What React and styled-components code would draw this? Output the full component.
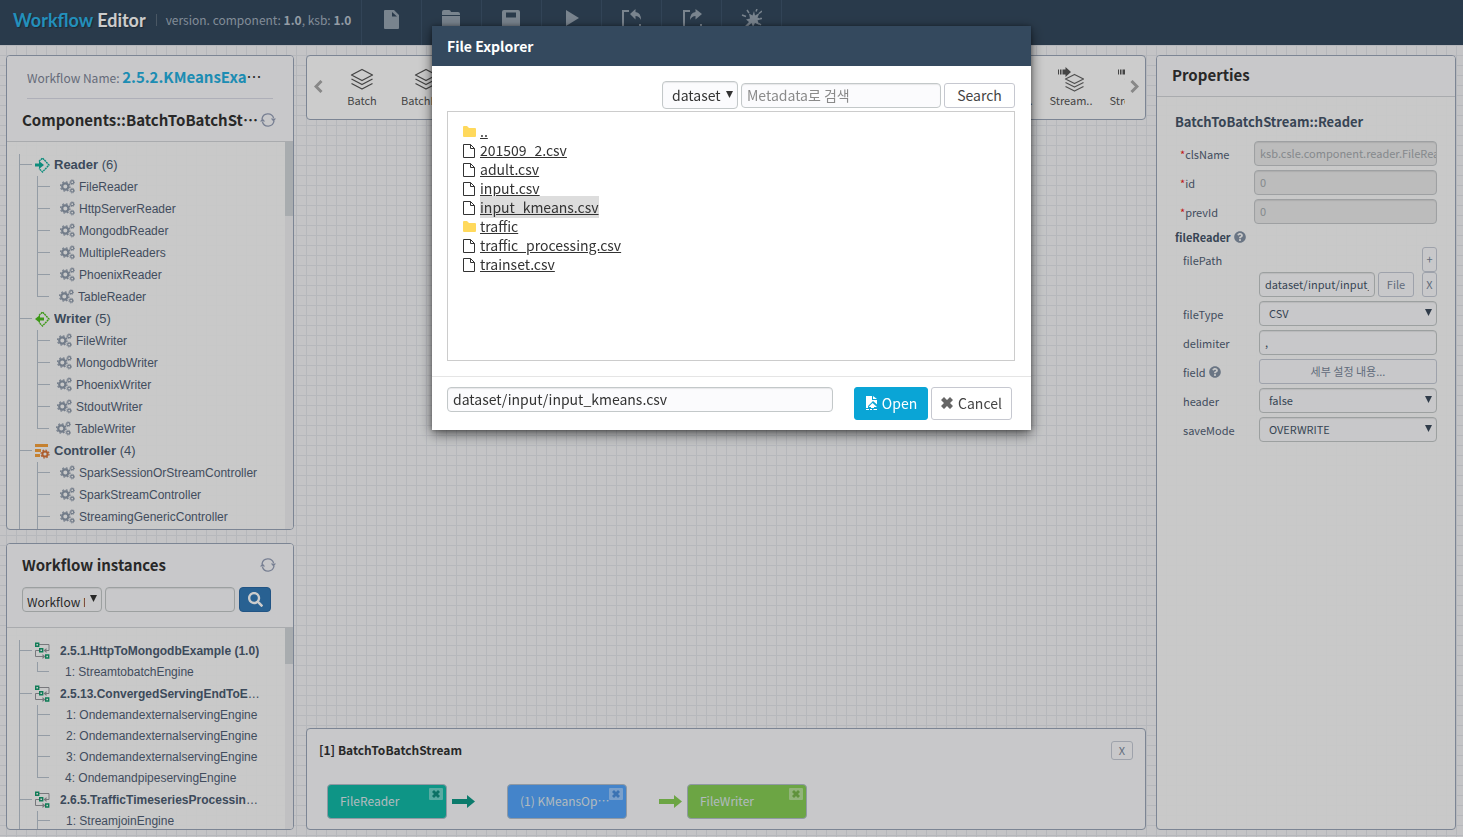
import React from "react";
import styled, { createGlobalStyle, css } from "styled-components";
import { FaQuestionCircle, FaSearch } from "react-icons/fa";

const sans = `"Noto Sans CJK KR", "Noto Sans", sans-serif`;
const arial = `"Liberation Sans", Arial, sans-serif`;

const GlobalStyle = createGlobalStyle`
  *, *::before, *::after { box-sizing: border-box; }
  body { margin: 0; font-family: ${sans}; font-size: 12px; color: #333; }
  button, input, select { font-family: inherit; margin: 0; outline: none; }
  ul { list-style: none; margin: 0; padding: 0; }
  h1, h2, h3, p { margin: 0; }
  svg { display: block; flex: none; }
`;

/* ---------- page shell ---------- */

const Page = styled.div`
  display: flex;
  flex-direction: column;
  height: 100vh;
  overflow: hidden;
  background-color: #f5f6f8;
  background-image: linear-gradient(#e4e6ec 1px, transparent 1px),
    linear-gradient(90deg, #e4e6ec 1px, transparent 1px);
  background-size: 10px 10px;
  background-position: 6px 5px;
`;

const TopBar = styled.header`
  display: flex;
  flex: none;
  height: 45px;
  background: #34495e;
`;

const Brand = styled.div`
  display: flex;
  align-items: center;
  width: 361px;
  padding: 0 0 6px 13px;
  white-space: nowrap;
`;

const Logo = styled.h1`
  font: 700 18px/24px Lato, sans-serif;
  color: #fff;
  text-shadow: 1px 1px 1px rgba(0, 0, 0, 0.3);
  span { color: #2cb4ea; }
`;

const Version = styled.p`
  margin-left: 10px;
  padding-left: 9px;
  border-left: 1px solid #5d6d7e;
  font-size: 12px;
  line-height: 12px;
  color: #a3b0be;
  b { color: #b9c4d0; }
`;

const Tools = styled.nav`
  display: flex;
  border-right: 1px solid #3f566d;
`;

const ToolButton = styled.button`
  display: flex;
  justify-content: center;
  width: 60px;
  padding: 9px 1px 0 0;
  border: 0;
  border-left: 1px solid #3f566d;
  background: none;
  color: #98a5b2;
`;

const Workspace = styled.main`
  display: grid;
  flex: 1;
  min-height: 0;
  grid-template-columns: 288px minmax(0, 1fr) 300px;
  column-gap: 10px;
  padding: 10px 7px 7px 6px;
`;

const SideColumn = styled.div`
  display: flex;
  flex-direction: column;
  gap: 13px;
  min-height: 0;
`;

const CenterColumn = styled.div`
  display: flex;
  flex-direction: column;
  justify-content: space-between;
  min-width: 0;
  padding-left: 2px;
`;

const Panel = styled.section`
  display: flex;
  flex-direction: column;
  flex: ${(p) => p.$grow || "none"};
  min-height: 0;
  overflow: hidden;
  border: 1px solid #9ca7b9;
  border-radius: 4px;
  background: rgba(253, 253, 253, 0.85);
`;

const PanelHead = styled.div`
  flex: none;
  height: ${(p) => p.$height}px;
  padding: ${(p) => p.$top || 8}px 17px 0 15px;
  border-bottom: 1px solid #d4d6da;
  background: #fafbfd;
`;

const TitleRow = styled.div`
  display: flex;
  align-items: center;
  justify-content: space-between;
`;

const PanelTitle = styled.h2`
  overflow: hidden;
  font-size: 15px;
  font-weight: 700;
  line-height: 22px;
  white-space: nowrap;
  text-overflow: ellipsis;
`;

const IconButton = styled.button`
  display: flex;
  padding: 0;
  border: 0;
  background: none;
  color: #97a0b8;
`;

const NameRow = styled.p`
  margin: 0 0 10px 5px;
  padding-bottom: 8px;
  width: 246px;
  border-bottom: 1px solid #dadbe6;
  line-height: 25px;
`;

const NameText = styled.span`
  display: block;
  width: 236px;
  overflow: hidden;
  font-size: 15px;
  white-space: nowrap;
  text-overflow: ellipsis;
  span { font-size: 12px; color: #808698; }
  b { color: #25b0e0; }
`;

/* ---------- tree ---------- */

const TreeArea = styled.div`
  display: flex;
  flex: 1;
  min-height: 0;
  overflow: hidden;
`;

const TreeList = styled.ul`
  flex: 1;
  min-width: 0;
  padding: 12px 0 0 12px;
`;

const ScrollTrack = styled.div`
  width: 8px;
  background: #f1f1f3;
`;

const ScrollThumb = styled.div`
  height: ${(p) => p.$size}px;
  background: #d3d8db;
`;

const line = "linear-gradient(#b9c3cf, #b9c3cf)";

const Branch = styled.li`
  padding-left: 16px;
  background: ${line} 0 0 / 1px 100% no-repeat, ${line} 0 10px / 13px 1px no-repeat;
`;

const BranchLabel = styled.div`
  display: flex;
  align-items: center;
  gap: ${(p) => p.$gap}px;
  height: 22px;
  font: ${(p) => p.$size}px/22px ${arial};
  color: #4c5d72;
`;

const BranchText = styled.span`
  max-width: 203px;
  overflow: hidden;
  white-space: nowrap;
  text-overflow: ellipsis;
`;

const Leaf = styled.li`
  display: flex;
  align-items: center;
  gap: 4px;
  height: ${(p) => p.$height}px;
  margin-left: 2px;
  padding-left: ${(p) => p.$indent}px;
  font: 12px/20px ${arial};
  white-space: nowrap;
  color: #526176;
  background: ${line} 0 0 / 1px 100% no-repeat,
    ${line} 0 ${(p) => p.$height - 12}px / 13px 1px no-repeat;
  svg { margin-bottom: 2px; color: #8f9bac; }
  &:last-child {
    padding-left: ${(p) => p.$indent - 1}px;
    background-size: 1px ${(p) => p.$height - 12}px, 12px 1px;
  }
`;

/* ---------- form parts ---------- */

const fieldBox = css`
  height: 25px;
  border: 1px solid #c3c8c9;
  border-radius: 4px;
  background: #fbfbfd;
  box-shadow: inset 0 1px 1px rgba(0, 0, 0, 0.08);
`;

const TextField = styled.input`
  ${fieldBox}
  flex: ${(p) => p.$flex || "1"};
  width: ${(p) => p.$width || "auto"};
  min-width: 0;
  padding: 0 5px 1px;
  font-size: ${(p) => p.$size || 11}px;
  color: ${(p) => p.$ink || "#46566a"};
  &:disabled { padding-right: 0; background: #ebebeb; border-color: #c6c9cb; color: #a7abb0; }
  &::placeholder { color: #8a8a8a; opacity: 1; }
`;

const SelectWrap = styled.span`
  display: grid;
  flex: ${(p) => p.$flex || "1"};
  width: ${(p) => p.$width || "auto"};
  align-items: center;
  & > * { grid-area: 1 / 1; }
  & > svg { justify-self: end; margin: 0 5px 2px 0; pointer-events: none; color: ${(p) => p.$ink || "#3d4b5d"}; }
`;

const SelectBox = styled.select`
  ${fieldBox}
  appearance: none;
  width: 100%;
  height: ${(p) => p.$height || 25}px;
  padding: ${(p) => p.$pad || "0 16px 1px 9px"};
  font-size: ${(p) => p.$size || 11}px;
  color: ${(p) => p.$ink || "#46566a"};
`;

const GhostButton = styled.button`
  flex: ${(p) => p.$flex || "none"};
  width: ${(p) => p.$width || "auto"};
  height: ${(p) => p.$height || 25}px;
  padding: 0;
  border: 1px solid #c6cbd6;
  border-radius: 3px;
  background: #fbfbfd;
  font-size: 11px;
  line-height: 1;
  color: #79879b;
`;

const SearchRow = styled.div`
  display: flex;
  gap: 3px;
  margin-top: 11px;
`;

const BlueButton = styled.button`
  display: flex;
  align-items: center;
  justify-content: center;
  width: 32px;
  height: 25px;
  margin-left: 1px;
  border: 1px solid #2b6aa6;
  border-radius: 4px;
  background: #337ab7;
  color: #fff;
`;

/* ---------- stream strip ---------- */

const Strip = styled.section`
  display: flex;
  align-items: center;
  height: 65px;
  padding: 0 6px 2px 7px;
  border: 1px solid #9ca7b9;
  border-radius: 4px;
  background: #fff;
`;

const StripView = styled.ul`
  display: flex;
  flex: 1;
  gap: 16px;
  min-width: 0;
  margin: 0 5px 0 17px;
  overflow: hidden;
`;

const StripItem = styled.li`
  display: flex;
  flex: none;
  flex-direction: column;
  align-items: center;
  width: ${(p) => (p.$wide ? 51 : 44)}px;
  font-size: 11px;
  line-height: 16px;
  color: #555;
`;

/* ---------- flow panel ---------- */

const FlowPanel = styled.section`
  height: 102px;
  padding: 11px 12px 0;
  border: 1px solid #9ca7b9;
  border-radius: 4px;
  background: #fafbfd;
`;

const FlowTitle = styled.h2`
  font-size: 12px;
  line-height: 20px;
`;

const FlowRow = styled.div`
  display: flex;
  align-items: center;
  margin: 24px 0 0 8px;
`;

const FlowNode = styled.div`
  display: flex;
  align-items: flex-start;
  width: 120px;
  height: 35px;
  padding: 3px 3px 0 12px;
  border: 1px solid #b4c0cc;
  border-radius: 4px;
  background: ${(p) => p.$fill};
  color: #dfe9ee;
  font-size: 12px;
  line-height: 26px;
  span {
    flex: 1;
    overflow: hidden;
    white-space: nowrap;
    text-overflow: ellipsis;
  }
`;

const NodeClose = styled.button`
  display: flex;
  align-items: center;
  justify-content: center;
  width: 14px;
  height: 12px;
  margin-left: -4px;
  padding: 0;
  border: 0;
  border-radius: 1px;
  background: rgba(255, 255, 255, 0.4);
  color: ${(p) => p.$ink};
`;

const FlowLink = styled.div`
  display: flex;
  justify-content: ${(p) => p.$side};
  width: 60px;
  padding: 0 5px;
  color: ${(p) => p.$ink};
`;

/* ---------- properties ---------- */

const Properties = styled.form`
  padding: 13px 18px 0;
`;

const SectionTitle = styled.h3`
  margin-bottom: 7px;
  font-size: 13px;
  line-height: 24px;
  color: #46566a;
`;

const GroupTitle = styled.h3`
  display: flex;
  align-items: center;
  gap: 3px;
  height: 17px;
  margin-bottom: 2px;
  font-size: 11px;
  color: #46566a;
  svg { color: #8593a5; }
`;

const Row = styled.div`
  display: flex;
  align-items: center;
  justify-content: ${(p) => (p.$spread ? "space-between" : "normal")};
  gap: 3px;
  margin-bottom: ${(p) => (p.$spread ? 0 : 4)}px;
  padding-left: ${(p) => p.$indent || 8}px;
`;

const RowLabel = styled.label`
  display: flex;
  align-items: center;
  gap: 3px;
  width: ${(p) => p.$width || 73}px;
  font-size: 11px;
  line-height: 18px;
  color: #526176;
  i { margin-right: -3px; font-style: normal; color: #f02020; }
  svg { color: #8593a5; }
`;

const PathButtons = styled.div`
  display: flex;
  justify-content: space-between;
  width: 59px;
`;

/* ---------- dialog ---------- */

const Overlay = styled.div`
  position: fixed;
  inset: 0;
  padding-top: 26px;
  background: rgba(0, 0, 0, 0.2);
`;

const Dialog = styled.div`
  width: 599px;
  max-width: 100%;
  margin: 0 auto;
  background: #fff;
  box-shadow: 0 4px 12px rgba(0, 0, 0, 0.6), 0 0 4px rgba(0, 0, 0, 0.3);
`;

const DialogHead = styled.h2`
  padding: 0 15px;
  background: #34495e;
  color: #fff;
  font-size: 14px;
  line-height: 40px;
`;

const DialogBody = styled.div`
  padding: 15px 16px 15px 15px;
`;

const Filter = styled.div`
  display: flex;
  align-items: center;
  justify-content: flex-end;
  gap: 3px;
  margin-bottom: 2px;
`;

const DialogButton = styled.button`
  display: flex;
  flex: none;
  align-items: center;
  justify-content: center;
  gap: 5px;
  width: ${(p) => p.$width}px;
  height: ${(p) => p.$height}px;
  padding: 0 0 1px;
  border: 1px solid ${(p) => (p.$primary ? "#0aa5d6" : "#c6c8d0")};
  border-radius: 3px;
  background: ${(p) => (p.$primary ? "#0aa5d6" : "#fff")};
  color: ${(p) => (p.$primary ? "#fff" : "#444")};
  font-size: 14px;
  line-height: 20px;
  svg { color: #666; }
`;

const FileList = styled.ul`
  height: 250px;
  padding: 10px 15px;
  border: 1px solid #ccc;
`;

const FileRow = styled.li`
  display: flex;
  align-items: center;
  gap: 4px;
  height: 19px;
  a {
    margin-bottom: 2px;
    font-size: 14px;
    line-height: 22px;
    color: #333;
    text-decoration: underline;
    background: ${(p) => (p.$picked ? "#ddd" : "none")};
  }
`;

const DialogFoot = styled.div`
  display: flex;
  gap: 3px;
  padding: 10px 19px 10px 15px;
  border-top: 1px solid #e5e5e5;
`;

const PathSlot = styled.div`
  display: flex;
  flex: 1;
  margin-right: 18px;
`;

/* ---------- drawings ---------- */

const Svg = ({ w, h, children, ...rest }) => (
  <svg width={w} height={h} viewBox={`0 0 ${w} ${h}`} aria-hidden="true" {...rest}>
    {children}
  </svg>
);

const Arrow = () => (
  <Svg w={7} h={7}><path d="M0 0h7L3.5 7z" fill="currentColor" /></Svg>
);

const Cross = ({ size = 8 }) => (
  <svg width={size} height={size} viewBox="0 0 12 12" aria-hidden="true">
    <path d="M3 0 6 3 9 0l3 3-3 3 3 3-3 3-3-3-3 3-3-3 3-3-3-3z" fill="currentColor" />
  </svg>
);

const Refresh = () => (
  <Svg w={16} h={14} fill="none" stroke="currentColor" strokeWidth="1.3">
    <path d="M2 6A6 6 0 0 1 13.6 5M14 8A6 6 0 0 1 2.400 9" />
    <path d="M10.800 5.500H16l-2.400 3.200zM0 8.500h5.200L2.400 5.300z" fill="currentColor" stroke="none" />
  </Svg>
);

const Cogs = () => (
  <Svg w={15} h={15} fill="none" stroke="currentColor">
    <circle cx="5.3" cy="7.500" r="3.100" strokeWidth="2.200" />
    <circle cx="5.3" cy="7.500" r="4.700" strokeWidth="1.300" strokeDasharray="1.850 1.840" />
    <circle cx="12.200" cy="3.200" r="1.500" strokeWidth="1.200" />
    <circle cx="12.200" cy="3.200" r="2.400" strokeWidth=".9" strokeDasharray="1 .885" />
    <circle cx="12.200" cy="11.600" r="1.500" strokeWidth="1.200" />
    <circle cx="12.200" cy="11.600" r="2.400" strokeWidth=".9" strokeDasharray="1 .885" />
  </Svg>
);

const Layers = () => (
  <Svg w={24} h={26} fill="none" stroke="#555" strokeWidth="1.3" strokeLinejoin="round">
    <path d="M12 3.500 22.500 9 12 14.500 1.500 9z" />
    <path d="M1.500 13 12 18.500 22.500 13M1.500 17.500 12 23l10.500-5.500" />
  </Svg>
);

const StreamLayers = () => (
  <Svg w={26} h={26} fill="none" stroke="#666" strokeWidth="1.3" strokeLinejoin="round">
    <path d="M16.500 8.500 25.500 13l-9 4.500L7.500 13zM7.500 16.500l9 4.500 9-4.500M7.500 20.500l9 4.500 9-4.500" />
    <path d="M0 3.500h1v5H0zM2 3.500h1.500v5H2zM4.500 3.500h3V1L13 6l-5.500 5V8.500h-3z" fill="#555" stroke="none" />
  </Svg>
);

const Chevron = ({ flip }) => (
  <Svg w={9} h={13} fill="none" stroke="#aaa" strokeWidth="3">
    <path d={flip ? "M1.500 1 7 6.500 1.500 12" : "M7.500 1 2 6.500 7.500 12"} />
  </Svg>
);

const toolIcons = [
  ["New", <path fillRule="evenodd" d="M5 1h9l5 5v13q0 1-1 1H5q-1 0-1-1V2q0-1 1-1zM12 3v4.500h5z" />],
  ["Open", <path d="M2 3q0-2 2-2h5q1.500 0 2 2h7q2 0 2 2v1H2zM2 7h18v12q0 1-2 1H4q-2 0-2-1z" />],
  ["Save", <path fillRule="evenodd" d="M2 3q0-2 2-2h14q2 0 2 2v17H2zM6 3.500v5h10v-5z" />],
  ["Run", <path d="M6 1 19 9 6 17z" />],
  ["Import", <><path d="M3 20V2h6M20 20v-5" fill="none" stroke="currentColor" strokeWidth="2" /><path d="M10 5 15.500 0v3q5.500.5 5.500 8-2-4-5.500-4v3.500z" /></>],
  ["Export", <><path d="M4 20V2h6M21 20v-5" fill="none" stroke="currentColor" strokeWidth="2" /><path d="M22 5 15.500 0v3Q10 3.500 10 11q2-4 5.500-4v3.500z" /></>],
  ["Magic", <><path d="m14 2 1 4.500 4.500-2.500-2 4.500 4 1.500-4 1.500 2 4.500-4.500-2L13 18l-1.500-4L5 20l-2-1 6-6-3-2.500 4-1L9 4.500l3.500 2z" /><path d="M7 1l2 3M17 0l-1 2.500M22 2l-3 2.500M2 6l4 1.500M20 9.500h2M21 16l-2-1.500" stroke="currentColor" strokeWidth="1.500" /></>],
];

const groupIcons = {
  reader: (
    <Svg w={15} h={16} fill="none" stroke="#12b09c" strokeWidth="1.400">
      <path d="M4 4.500 7.500 1l6.500 7-6.500 7L4 11.500" strokeDasharray="2 .6" />
      <path d="M0 6.500h4V4l5 4-5 4V9.500H0z" fill="#12b09c" stroke="none" />
    </Svg>
  ),
  writer: (
    <Svg w={15} h={16} fill="none" stroke="#4cbf1c" strokeWidth="1.400">
      <path d="M4 4.500 7.500 1l6.500 7-6.500 7L4 11.500" strokeDasharray="2 .6" />
      <path d="M9 6.500H5V4L0 8l5 4V9.500h4z" fill="#4cbf1c" stroke="none" />
    </Svg>
  ),
  controller: (
    <Svg w={15} h={16}>
      <path d="M0 1h13v3H0zM0 6h6v3H0zM0 11h5v3H0z" fill="#f7a23c" />
      <circle cx="10" cy="11" r="2.600" fill="none" stroke="#d9763a" strokeWidth="2" />
      <circle cx="10" cy="11" r="4" fill="none" stroke="#d9763a" strokeWidth="1.200" strokeDasharray="1.600 1.540" />
    </Svg>
  ),
  flow: (
    <Svg w={15} h={17} fill="none">
      <path d="M4 2.500h10v6h-3M4.500 8.500h-4v6h10" stroke="#95979c" />
      <path d="M11.500 6v5l-3-2.500zM7.500 12v5l3-2.500z" fill="#95979c" />
      <path d="M.7 1.200h3v3h-3zM4.700 6.700h3v3h-3zM10.700 13h3v3h-3z" fill="#f8f8f9" stroke="#129c6c" strokeWidth="1.400" />
    </Svg>
  ),
};

const FolderIcon = () => (
  <Svg w={13} h={12}><path d="M0 1q0-1 1-1h3l2 2h6q1 0 1 1v7q0 1-1 1H1q-1 0-1-1z" fill="#ffd95c" /></Svg>
);

const FileIcon = () => (
  <Svg w={13} h={14} fill="none" stroke="#333">
    <path d="M.5.500h7l4 4v9H.5zM7.500.500v4h4" />
  </Svg>
);

const OpenIcon = () => (
  <Svg w={12} h={14}>
    <path d="M1 0h6v4h5v4.500L8 5 3 10v2H1zM8 0l4 3H8zM7.500 7 12 11H9v1H6v-1H3.500zM1 13h3v1H1zM5 13h2v1H5zM8.500 13H12v1H8.500z" fill="#fff" />
  </Svg>
);

const LinkArrow = () => (
  <Svg w={23} h={13}><path d="M0 4h15V0l8 6.500L15 13V9H0z" fill="currentColor" /></Svg>
);

/* ---------- data ---------- */

const components = [
  { name: "Reader", icon: "reader", indent: 23, items: ["FileReader", "HttpServerReader", "MongodbReader", "MultipleReaders", "PhoenixReader", "TableReader"], count: 6 },
  { name: "Writer", icon: "writer", indent: 20, items: ["FileWriter", "MongodbWriter", "PhoenixWriter", "StdoutWriter", "TableWriter"], count: 5 },
  { name: "Controller", icon: "controller", indent: 23, items: ["SparkSessionOrStreamController", "SparkStreamController", "StreamingGenericController", "StreamController"], count: 4 },
];

const instances = [
  { name: "2.5.1.HttpToMongodbExample (1.0)", items: ["1: StreamtobatchEngine"] },
  { name: "2.5.13.ConvergedServingEndToEndExample (1.0)", items: ["1: OndemandexternalservingEngine", "2: OndemandexternalservingEngine", "3: OndemandexternalservingEngine", "4: OndemandpipeservingEngine"] },
  { name: "2.6.5.TrafficTimeseriesProcessingExample (1.0)", items: ["1: StreamjoinEngine", "2: StreamtobatchEngine"] },
];

const streams = [
  ["Batch"], ["BatchBa..", 1], ["Stream.."], ["BatchT..", 1], ["BatchT..", 1], ["Stream.."], ["BatchM..", 1],
  ["BatchG..", 1], ["BatchL..", 1], ["BatchS..", 1], ["Stream.."], ["Stream.."], ["Stream.."],
];

const files = [
  ["..", true], ["201509_2.csv"], ["adult.csv"], ["input.csv"], ["input_kmeans.csv"],
  ["traffic", true], ["traffic_processing.csv"], ["trainset.csv"],
];

const Select = ({ id, label, value, wrap, ...rest }) => (
  <SelectWrap {...wrap}>
    <SelectBox id={id} aria-label={label} defaultValue={value} {...rest}>
      <option>{value}</option>
    </SelectBox>
    <Arrow />
  </SelectWrap>
);

const Header = () => (
  <TopBar>
    <Brand>
      <Logo><span>Workflow</span> Editor</Logo>
      <Version>version. component: <b>1.0</b>, ksb: <b>1.0</b></Version>
    </Brand>
    <Tools>
      {toolIcons.map(([name, art]) => (
        <ToolButton key={name} aria-label={name}>
          <Svg w={22} h={21} fill="currentColor">{art}</Svg>
        </ToolButton>
      ))}
    </Tools>
  </TopBar>
);

const ComponentsPanel = () => (
  <Panel $grow="475 1 0">
    <PanelHead $height={86}>
      <NameRow><NameText><span>Workflow Name: </span><b>2.5.2.KMeansExample</b></NameText></NameRow>
      <TitleRow>
        <PanelTitle>Components::BatchToBatchStream</PanelTitle>
        <IconButton aria-label="Refresh components"><Refresh /></IconButton>
      </TitleRow>
    </PanelHead>
    <TreeArea>
      <TreeList>
        {components.map((g) => (
          <Branch key={g.name}>
            <BranchLabel $gap={4} $size={13}>
              {groupIcons[g.icon]}
              <BranchText><b>{g.name}</b> ({g.count})</BranchText>
            </BranchLabel>
            <ul>
              {g.items.map((n) => (
                <Leaf key={n} $height={22} $indent={g.indent}>
                  <Cogs />{n}
                </Leaf>
              ))}
            </ul>
          </Branch>
        ))}
      </TreeList>
      <ScrollTrack><ScrollThumb $size={74} /></ScrollTrack>
    </TreeArea>
  </Panel>
);

const InstancesPanel = () => (
  <Panel $grow="287 1 0">
    <PanelHead $height={84} $top={10}>
      <TitleRow>
        <PanelTitle>Workflow instances</PanelTitle>
        <IconButton aria-label="Refresh instances"><Refresh /></IconButton>
      </TitleRow>
      <SearchRow>
        <Select label="Search by" value="Workflow Name" wrap={{ $flex: "none", $width: "80px", $ink: "#333" }} $pad="5px 16px 0 4px" $size={12} $ink="#333" />
        <TextField aria-label="Search instances" $flex="none" $width="130px" />
        <BlueButton aria-label="Search"><FaSearch size={15} /></BlueButton>
      </SearchRow>
    </PanelHead>
    <TreeArea>
      <TreeList>
        {instances.map((g) => (
          <Branch key={g.name}>
            <BranchLabel $gap={10} $size={12}>
              {groupIcons.flow}
              <BranchText><b>{g.name}</b></BranchText>
            </BranchLabel>
            <ul>
              {g.items.map((n) => (
                <Leaf key={n} $height={21} $indent={29}>{n}</Leaf>
              ))}
            </ul>
          </Branch>
        ))}
      </TreeList>
      <ScrollTrack><ScrollThumb $size={36} /></ScrollTrack>
    </TreeArea>
  </Panel>
);

const Center = () => (
  <CenterColumn>
    <Strip>
      <IconButton aria-label="Previous"><Chevron /></IconButton>
      <StripView>
        {streams.map(([name, wide], i) => (
          <StripItem key={i} $wide={wide}>
            {i < 2 ? <Layers /> : <StreamLayers />}
            {name}
          </StripItem>
        ))}
      </StripView>
      <IconButton aria-label="Next"><Chevron flip /></IconButton>
    </Strip>
    <FlowPanel>
      <TitleRow>
        <FlowTitle>[1] BatchToBatchStream</FlowTitle>
        <GhostButton $width="22px" $height={19}>X</GhostButton>
      </TitleRow>
      <FlowRow>
        <FlowNode $fill="#12bba8">
          <span>FileReader</span>
          <NodeClose $ink="#0f8f80" aria-label="Remove FileReader"><Cross /></NodeClose>
        </FlowNode>
        <FlowLink $side="flex-start" $ink="#109a88"><LinkArrow /></FlowLink>
        <FlowNode $fill="#55a5fd">
          <span>(1) KMeansOperator</span>
          <NodeClose $ink="#4a90e0" aria-label="Remove KMeansOperator"><Cross /></NodeClose>
        </FlowNode>
        <FlowLink $side="flex-end" $ink="#88cf55"><LinkArrow /></FlowLink>
        <FlowNode $fill="#88cf55">
          <span>FileWriter</span>
          <NodeClose $ink="#78b74b" aria-label="Remove FileWriter"><Cross /></NodeClose>
        </FlowNode>
      </FlowRow>
    </FlowPanel>
  </CenterColumn>
);

const PropertiesPanel = () => (
  <Panel>
    <PanelHead $height={41}><PanelTitle>Properties</PanelTitle></PanelHead>
    <Properties>
      <SectionTitle>BatchToBatchStream::Reader</SectionTitle>
      {[["clsName", "ksb.csle.component.reader.FileReader"], ["id", "0"], ["prevId", "0"]].map(([name, value]) => (
        <Row key={name} $indent={5}>
          <RowLabel $width={71} htmlFor={name}><i>*</i>{name}</RowLabel>
          <TextField id={name} defaultValue={value} disabled />
        </Row>
      ))}
      <GroupTitle>fileReader<FaQuestionCircle size={12} /></GroupTitle>
      <Row $spread>
        <RowLabel htmlFor="filePath">filePath</RowLabel>
        <GhostButton type="button" $width="15px">+</GhostButton>
      </Row>
      <Row $indent={84}>
        <TextField id="filePath" defaultValue="dataset/input/input_kmeans.csv" />
        <PathButtons>
          <GhostButton type="button" $width="36px">File</GhostButton>
          <GhostButton type="button" $width="15px">X</GhostButton>
        </PathButtons>
      </Row>
      <Row>
        <RowLabel htmlFor="fileType">fileType</RowLabel>
        <Select id="fileType" value="CSV" />
      </Row>
      <Row>
        <RowLabel htmlFor="delimiter">delimiter</RowLabel>
        <TextField id="delimiter" defaultValue="," />
      </Row>
      <Row>
        <RowLabel htmlFor="field">field<FaQuestionCircle size={12} /></RowLabel>
        <GhostButton type="button" id="field" $flex="1">세부 설정 내용...</GhostButton>
      </Row>
      <Row>
        <RowLabel htmlFor="header">header</RowLabel>
        <Select id="header" value="false" />
      </Row>
      <Row>
        <RowLabel htmlFor="saveMode">saveMode</RowLabel>
        <Select id="saveMode" value="OVERWRITE" />
      </Row>
    </Properties>
  </Panel>
);

const FileExplorer = () => (
  <Overlay>
    <Dialog role="dialog" aria-modal="true" aria-labelledby="explorer-title">
      <DialogHead id="explorer-title">File Explorer</DialogHead>
      <DialogBody>
        <Filter>
          <Select label="Folder" value="dataset" wrap={{ $flex: "none", $width: "76px", $ink: "#333" }} $height={28} $size={14} $ink="#333" />
          <TextField aria-label="Metadata" placeholder="Metadata로 검색" $flex="none" $width="200px" $size={14} />
          <DialogButton $width={71} $height={25}>Search</DialogButton>
        </Filter>
        <FileList>
          {files.map(([name, folder]) => (
            <FileRow key={name} $picked={name === "input_kmeans.csv"}>
              {folder ? <FolderIcon /> : <FileIcon />}
              <a href="#file">{name}</a>
            </FileRow>
          ))}
        </FileList>
      </DialogBody>
      <DialogFoot>
        <PathSlot>
          <TextField aria-label="Selected path" defaultValue="dataset/input/input_kmeans.csv" $size={14} $ink="#333" />
        </PathSlot>
        <DialogButton $primary $width={74} $height={33}><OpenIcon />Open</DialogButton>
        <DialogButton $width={81} $height={33}><Cross size={12} />Cancel</DialogButton>
      </DialogFoot>
    </Dialog>
  </Overlay>
);

export default function App() {
  return (
    <>
      <GlobalStyle />
      <Page>
        <Header />
        <Workspace>
          <SideColumn>
            <ComponentsPanel />
            <InstancesPanel />
          </SideColumn>
          <Center />
          <PropertiesPanel />
        </Workspace>
      </Page>
      <FileExplorer />
    </>
  );
}
